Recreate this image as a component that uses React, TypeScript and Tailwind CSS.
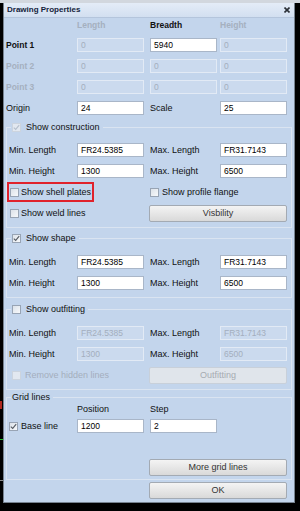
import React from "react";

function Field({ value, disabled }: { value: string; disabled?: boolean }) {
  return (
    <div
      className={`w-[67px] h-[14px] shrink-0 px-[3px] flex items-center border text-[8.5px] ${
        disabled
          ? "bg-[#cbdaee] border-[#e2eaf5] text-[#a3aebd]"
          : "bg-white border-[#a9b6c8] text-black"
      }`}
    >
      {value}
    </div>
  );
}

function Check({ checked, disabled }: { checked?: boolean; disabled?: boolean }) {
  return (
    <span
      className={`w-[9px] h-[9px] shrink-0 border flex items-center justify-center ${
        disabled
          ? "border-[#ccd4de] bg-[#e2e8f0]"
          : "border-[#98a4b4] bg-linear-to-br from-[#dce2e9] to-[#f7f9fb]"
      }`}
    >
      {checked && (
        <svg width="7" height="7" viewBox="0 0 7 7">
          <path
            d="M0.8 3.6 L2.7 5.4 L6.2 1.2"
            fill="none"
            stroke={disabled ? "#b5bfcc" : "#555b63"}
            strokeWidth="1.1"
          />
        </svg>
      )}
    </span>
  );
}

function Btn({ label, disabled }: { label: string; disabled?: boolean }) {
  return (
    <div
      className={`w-[138px] h-[17px] shrink-0 flex items-center justify-center border rounded-[2px] ${
        disabled
          ? "border-[#c8d0da] bg-[#e0e5eb] text-[#a6abb2]"
          : "border-[#a3aab3] bg-linear-to-b from-[#f4f4f4] to-[#d9d9d9] text-[#333]"
      }`}
    >
      {label}
    </div>
  );
}

function Group({
  title,
  check,
  checked,
  disabled,
  className,
  children,
}: {
  title: string;
  check?: boolean;
  checked?: boolean;
  disabled?: boolean;
  className: string;
  children: React.ReactNode;
}) {
  return (
    <fieldset className={`mx-[2px] border border-[#dae4f1] ${className}`}>
      <legend className="ml-[4px] px-[1px]">
        <div className="h-[14px] flex items-center gap-[5px] pr-[2px]">
          {check && <Check checked={checked} disabled={disabled} />}
          <span>{title}</span>
        </div>
      </legend>
      {children}
    </fieldset>
  );
}

function MinMaxRows({ a, b, c, d, disabled, first }: { a: string; b: string; c: string; d: string; disabled?: boolean; first: string }) {
  return (
    <>
      <div className={`flex items-center h-[14px] ${first}`}>
        <span className="w-[70px] pl-[2px]">Min. Length</span>
        <Field value={a} disabled={disabled} />
        <span className="w-[70px] ml-[6px]">Max. Length</span>
        <Field value={b} disabled={disabled} />
      </div>
      <div className="flex items-center h-[14px] mt-[7px]">
        <span className="w-[70px] pl-[2px]">Min. Height</span>
        <Field value={c} disabled={disabled} />
        <span className="w-[70px] ml-[6px]">Max. Height</span>
        <Field value={d} disabled={disabled} />
      </div>
    </>
  );
}

export default function App() {
  return (
    <div className="w-[300px] h-[511px] bg-black flex flex-col overflow-hidden whitespace-nowrap font-['Liberation_Sans',Arial,sans-serif] text-[9px] leading-none text-[#111]">
      <div className="h-[3px] shrink-0 bg-[#d2d7de]" />
      <div className="flex flex-1">
        {/* bits of the drawing behind the dialog */}
        <div className="w-[3px] shrink-0 flex flex-col">
          <div className="mt-[398px] h-[8px] w-[2px] bg-[#b0281e]" />
          <div className="mt-[30px] h-[1px] w-[3px] bg-[#22c02a]" />
          <div className="mt-[40px] h-[1px] w-[3px] bg-[#8a8a8a]" />
        </div>

        <div className="w-[292px] h-[500px] shrink-0 flex flex-col border-x border-b border-[#76828f] bg-[#c3d5ec]">
          {/* title bar */}
          <div className="h-[15px] shrink-0 flex items-center justify-between pl-[3px] pr-[4px] bg-linear-to-b from-[#e4ecf7] to-[#d2dff0] border-b border-[#b4c5dc]">
            <span className="font-bold text-[8px] text-[#14233a]">Drawing Properties</span>
            <svg width="6" height="6" viewBox="0 0 6 6">
              <path d="M0.5 0.5 L5.5 5.5 M5.5 0.5 L0.5 5.5" stroke="#2a2f36" strokeWidth="1.6" />
            </svg>
          </div>

          {/* point grid */}
          <div className="flex items-center h-[14px] font-bold text-[8.5px]">
            <span className="w-[73px]" />
            <span className="w-[67px] text-[#a5b0bf]">Length</span>
            <span className="w-[67px] ml-[6px]">Breadth</span>
            <span className="w-[67px] ml-[3px] text-[#a5b0bf]">Height</span>
          </div>
          <div className="flex items-center h-[14px] mt-[6px]">
            <span className="w-[73px] pl-[2px] font-bold text-[8.5px]">Point 1</span>
            <Field value="0" disabled />
            <div className="ml-[6px]">
              <Field value="5940" />
            </div>
            <div className="ml-[3px]">
              <Field value="0" disabled />
            </div>
          </div>
          <div className="flex items-center h-[14px] mt-[7px]">
            <span className="w-[73px] pl-[2px] font-bold text-[8.5px] text-[#a5b0bf]">Point 2</span>
            <Field value="0" disabled />
            <div className="ml-[6px]">
              <Field value="0" disabled />
            </div>
            <div className="ml-[3px]">
              <Field value="0" disabled />
            </div>
          </div>
          <div className="flex items-center h-[14px] mt-[7px]">
            <span className="w-[73px] pl-[2px] font-bold text-[8.5px] text-[#a5b0bf]">Point 3</span>
            <Field value="0" disabled />
            <div className="ml-[6px]">
              <Field value="0" disabled />
            </div>
            <div className="ml-[3px]">
              <Field value="0" disabled />
            </div>
          </div>
          <div className="flex items-center h-[14px] mt-[7px]">
            <span className="w-[73px] pl-[2px]">Origin</span>
            <Field value="24" />
            <span className="w-[70px] ml-[6px]">Scale</span>
            <Field value="25" />
          </div>

          {/* construction */}
          <Group title="Show construction" check checked disabled className="mt-[5px] pb-[5px]">
            <MinMaxRows a="FR24.5385" b="FR31.7143" c="1300" d="6500" first="mt-[9px]" />
            <div className="flex items-center h-[20px] mt-[4px]">
              <div className="w-[143px] flex items-center">
                <div className="w-[87px] h-[20px] border-2 border-[#e0222c] flex items-center gap-[2px] pl-[1px]">
                  <Check />
                  <span>Show shell plates</span>
                </div>
              </div>
              <div className="flex items-center gap-[3px]">
                <Check />
                <span>Show profile flange</span>
              </div>
            </div>
            <div className="flex items-center h-[17px] mt-[3px]">
              <div className="w-[142px] flex items-center gap-[2px] pl-[3px]">
                <Check />
                <span>Show weld lines</span>
              </div>
              <Btn label="Visbility" />
            </div>
          </Group>

          {/* shape */}
          <Group title="Show shape" check checked className="mt-[3px] pb-[7px]">
            <MinMaxRows a="FR24.5385" b="FR31.7143" c="1300" d="6500" first="mt-[10px]" />
          </Group>

          {/* outfitting */}
          <Group title="Show outfitting" check className="mt-[4px] pb-[5px]">
            <MinMaxRows a="FR24.5385" b="FR31.7143" c="1300" d="6500" disabled first="mt-[10px]" />
            <div className="flex items-center h-[17px] mt-[6px]">
              <div className="w-[142px] flex items-center gap-[4px] pl-[5px] text-[#a3aebd]">
                <Check disabled />
                <span>Remove hidden lines</span>
              </div>
              <Btn label="Outfitting" disabled />
            </div>
          </Group>

          {/* grid lines */}
          <Group title="Grid lines" className="pb-[3px]">
            <div className="flex items-center h-[10px]">
              <span className="w-[70px]" />
              <span className="w-[73px]">Position</span>
              <span>Step</span>
            </div>
            <div className="flex items-center h-[14px] mt-[5px]">
              <div className="w-[70px] flex items-center gap-[3px] pl-[2px]">
                <Check checked />
                <span>Base line</span>
              </div>
              <Field value="1200" />
              <div className="ml-[6px]">
                <Field value="2" />
              </div>
            </div>
            <div className="flex items-center h-[17px] mt-[26px]">
              <div className="w-[142px]" />
              <Btn label="More grid lines" />
            </div>
          </Group>

          <div className="flex mt-[2px] pl-[145px]">
            <Btn label="OK" />
          </div>
        </div>
      </div>
    </div>
  );
}
